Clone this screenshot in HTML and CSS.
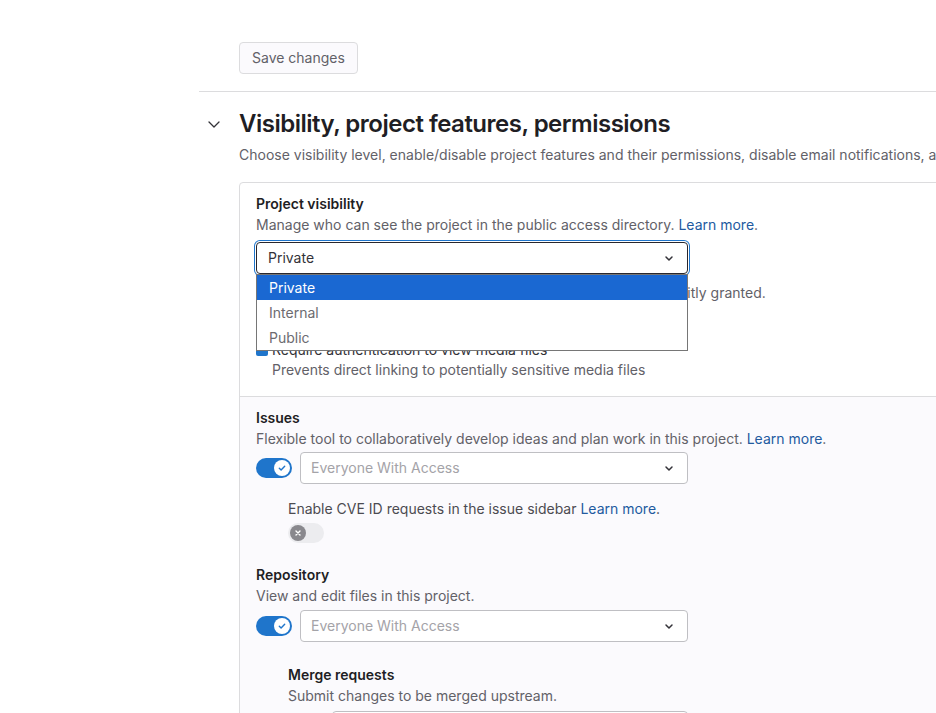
FILE: index.html
```html
<!DOCTYPE html>
<html lang="en">
<head>
<meta charset="utf-8">
<title>Visibility settings</title>
<link rel="stylesheet" href="styles.css">
</head>
<body>
<div class="page">
  <div class="save-row">
    <button class="btn" type="button">Save changes</button>
  </div>
  <section class="settings">
    <header class="settings-header">
      <button class="collapse-btn" type="button" aria-label="Collapse">
        <svg width="16" height="16" viewBox="0 0 16 16"><path d="M3 6l5 5 5-5" fill="none" stroke="#333238" stroke-width="1.3" stroke-linecap="round" stroke-linejoin="round"/></svg>
      </button>
      <h2 class="settings-title">Visibility, project features, permissions</h2>
    </header>
    <p class="settings-desc">Choose visibility level, enable/disable project features and their permissions, disable email notifications, and show default award emoji.</p>

    <div class="panel">
      <div class="panel-section top">
        <div class="label">Project visibility</div>
        <div class="help">Manage who can see the project in the public access directory. <a class="link" href="#">Learn more</a>.</div>
        <div class="select-wrap">
          <div class="select focused">
            <span>Private</span>
            <svg class="caret" width="16" height="16" viewBox="0 0 16 16"><path d="M5 7l3 3 3-3" fill="none" stroke="#333238" stroke-width="1.5" stroke-linecap="round" stroke-linejoin="round"/></svg>
          </div>
          <ul class="popup">
            <li class="option selected">Private</li>
            <li class="option">Internal</li>
            <li class="option">Public</li>
          </ul>
        </div>
        <div class="help help-after">Only accessible by project members. Membership must be explicitly granted.</div>
        <div class="check-row">
          <span class="checkbox"></span>
          <div>
            <div class="check-label">Require authentication to view media files</div>
            <div class="help">Prevents direct linking to potentially sensitive media files</div>
          </div>
        </div>
      </div>

      <div class="panel-section features">
        <div class="label">Issues</div>
        <div class="help">Flexible tool to collaboratively develop ideas and plan work in this project. <a class="link" href="#">Learn more</a>.</div>
        <div class="feature-row first">
          <span class="toggle on"><span class="knob"><svg width="10" height="10" viewBox="0 0 10 10"><path d="M2.3 5.2l1.8 1.8 3.6-3.8" fill="none" stroke="#1f75cb" stroke-width="1.4" stroke-linecap="round" stroke-linejoin="round"/></svg></span></span>
          <div class="select muted">
            <span>Everyone With Access</span>
            <svg class="caret" width="16" height="16" viewBox="0 0 16 16"><path d="M5 7l3 3 3-3" fill="none" stroke="#333238" stroke-width="1.5" stroke-linecap="round" stroke-linejoin="round"/></svg>
          </div>
        </div>
        <div class="sub cve">
          <div class="help dark">Enable CVE ID requests in the issue sidebar <a class="link" href="#">Learn more</a>.</div>
          <span class="toggle off"><span class="knob"><svg width="8" height="8" viewBox="0 0 8 8"><path d="M2 2l4 4M6 2l-4 4" fill="none" stroke="#fff" stroke-width="1.4" stroke-linecap="round"/></svg></span></span>
        </div>

        <div class="label gap">Repository</div>
        <div class="help">View and edit files in this project.</div>
        <div class="feature-row">
          <span class="toggle on"><span class="knob"><svg width="10" height="10" viewBox="0 0 10 10"><path d="M2.3 5.2l1.8 1.8 3.6-3.8" fill="none" stroke="#1f75cb" stroke-width="1.4" stroke-linecap="round" stroke-linejoin="round"/></svg></span></span>
          <div class="select muted">
            <span>Everyone With Access</span>
            <svg class="caret" width="16" height="16" viewBox="0 0 16 16"><path d="M5 7l3 3 3-3" fill="none" stroke="#333238" stroke-width="1.5" stroke-linecap="round" stroke-linejoin="round"/></svg>
          </div>
        </div>
        <div class="sub mr">
          <div class="label">Merge requests</div>
          <div class="help">Submit changes to be merged upstream.</div>
          <div class="feature-row">
            <span class="toggle on"><span class="knob"><svg width="10" height="10" viewBox="0 0 10 10"><path d="M2.3 5.2l1.8 1.8 3.6-3.8" fill="none" stroke="#1f75cb" stroke-width="1.4" stroke-linecap="round" stroke-linejoin="round"/></svg></span></span>
            <div class="select muted">
              <span>Everyone With Access</span>
              <svg class="caret" width="16" height="16" viewBox="0 0 16 16"><path d="M5 7l3 3 3-3" fill="none" stroke="#333238" stroke-width="1.5" stroke-linecap="round" stroke-linejoin="round"/></svg>
            </div>
          </div>
        </div>
      </div>
    </div>
  </section>
</div>
</body>
</html>
```

FILE: styles.css
```css
html, body {
  margin: 0;
  padding: 0;
  background: #fff;
  overflow: hidden;
}

body {
  font-family: Inter, "Noto Sans", "Liberation Sans", sans-serif;
  font-size: 14px;
  line-height: 20px;
  color: #333238;
}

.page {
  margin-left: 199px;
  width: 900px;
}

.save-row {
  padding: 42px 0 17px 40px;
  border-bottom: 1px solid #dcdcde;
}

.btn {
  height: 32px;
  padding: 0 12px;
  border: 1px solid #dcdcde;
  border-radius: 4px;
  background: #fbfafd;
  color: #626168;
  font-family: inherit;
  font-size: 14px;
  line-height: 20px;
}

.settings {
  padding-left: 40px;
}

.settings-header {
  display: flex;
  align-items: center;
  margin-left: -40px;
  margin-top: 16px;
}

.collapse-btn {
  width: 30px;
  margin-right: 10px;
  height: 32px;
  padding: 0;
  border: 0;
  background: transparent;
  display: flex;
  align-items: center;
  justify-content: center;
}

.settings-title {
  margin: 0;
  font-size: 24px;
  line-height: 32px;
  font-weight: 600;
  color: #1f1e24;
  letter-spacing: -0.5px;
}

.settings-desc {
  margin: 5px 0 0;
  color: #626168;
  white-space: nowrap;
}

.panel {
  margin-top: 17px;
  border: 1px solid #dcdcde;
  border-radius: 4px;
  width: 760px;
}

.panel-section {
  padding: 11px 16px 16px;
}

.panel-section.features {
  background: #fbfafd;
  border-top: 1px solid #dcdcde;
  padding-top: 11px;
}

.label {
  font-weight: 600;
  color: #1f1e24;
  margin-bottom: 1px;
}

.label.gap {
  margin-top: 22px;
}

.help {
  color: #626168;
}

.help.dark {
  color: #4c4b51;
}

.link {
  color: #235a9f;
  text-decoration: none;
}

.select-wrap {
  position: relative;
  width: 432px;
  margin-top: 7px;
}

.select {
  box-sizing: border-box;
  height: 32px;
  display: flex;
  align-items: center;
  justify-content: space-between;
  padding: 0 12px 0 11px;
  border: 1px solid #bfbfc3;
  border-radius: 4px;
  background: #fff;
  color: #333238;
}

.select.focused {
  border-color: #28272d;
  box-shadow: 0 0 0 1px #fff, 0 0 0 2px #1f75cb;
}

.select.muted {
  color: #a4a3a8;
  flex: 0 0 388px;
  width: 388px;
  padding-left: 10px;
}

.sub .select.muted {
  flex-basis: 356px;
  width: 356px;
}

.caret {
  flex: none;
  margin-right: -2px;
}

.popup {
  position: absolute;
  top: 32px;
  left: 0;
  width: 432px;
  box-sizing: border-box;
  margin: 0;
  padding: 0;
  list-style: none;
  background: #fff;
  border: 1px solid #767676;
  z-index: 5;
}

.option {
  height: 25px;
  line-height: 25px;
  padding-left: 12px;
  color: #6c6b70;
}

.option.selected {
  background: #1a68d2;
  color: #fff;
}

.help-after {
  margin-top: 9px;
}

.check-row {
  display: flex;
  gap: 4px;
  margin-top: 37px;
}

.checkbox {
  flex: none;
  width: 12px;
  height: 12px;
  margin-top: 4px;
  border-radius: 2px;
  background: #1f75cb;
}

.check-label {
  color: #333238;
}

.feature-row {
  display: flex;
  align-items: center;
  gap: 8px;
  margin-top: 4px;
}

.feature-row.first {
  margin-top: 3px;
}

.toggle {
  flex: none;
  position: relative;
  display: inline-flex;
  align-items: center;
  width: 36px;
  height: 20px;
  border-radius: 10px;
  box-sizing: border-box;
  padding: 2px;
}

.toggle.on {
  background: #1f75cb;
  justify-content: flex-end;
}

.toggle.off {
  background: #ececef;
  justify-content: flex-start;
  margin-top: 4px;
}

.knob {
  width: 16px;
  height: 16px;
  border-radius: 50%;
  display: flex;
  align-items: center;
  justify-content: center;
}

.toggle.on .knob {
  background: #fff;
}

.toggle.off .knob {
  background: #89888d;
}

.sub {
  margin-left: 32px;
}

.sub.cve {
  margin-top: 15px;
}

.sub.mr {
  margin-top: 23px;
}

.sub.mr .feature-row {
  margin-top: 5px;
}
```
